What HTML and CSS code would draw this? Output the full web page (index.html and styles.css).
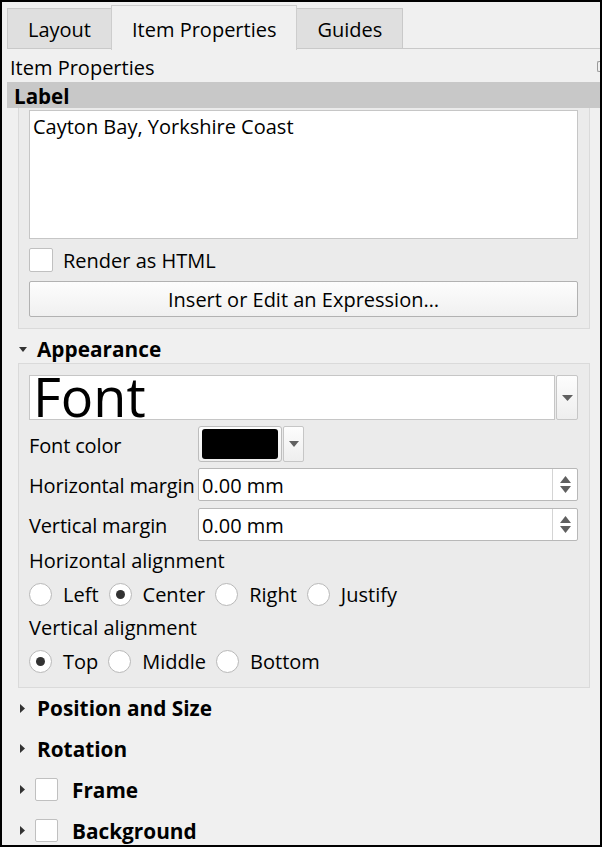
FILE: index.html
```html
<!DOCTYPE html>
<html>
<head>
<meta charset="utf-8">
<link rel="stylesheet" href="styles.css">
</head>
<body>
<div class="window">
  <div class="tabbar">
    <div class="tab">Layout</div>
    <div class="tab selected">Item Properties</div>
    <div class="tab">Guides</div>
    <div class="tab-fill"></div>
  </div>
  <div class="caption">
    <span>Item Properties</span>
    <span class="handle"></span>
  </div>
  <div class="scroll">
    <div class="section-bar">Label</div>
    <div class="group label-group">
      <div class="textarea">Cayton Bay, Yorkshire Coast</div>
      <div class="check-row">
        <span class="checkbox"></span>
        <span class="check-text">Render as HTML</span>
      </div>
      <div class="button">Insert or Edit an Expression…</div>
    </div>

    <div class="coll-header open">
      <svg class="arrow-down" width="8" height="5" viewBox="0 0 8 5"><polygon points="0,0 8,0 4,5" fill="#333"/></svg>
      <span>Appearance</span>
    </div>
    <div class="group appearance-group">
      <div class="font-combo">
        <div class="font-main"><span class="font-sample">Font</span></div>
        <div class="drop-btn big">
          <svg width="11" height="6" viewBox="0 0 11 6"><polygon points="0,0 11,0 5.5,6" fill="#606060"/></svg>
        </div>
      </div>
      <div class="form-row color-row">
        <span class="form-label">Font color</span>
        <div class="color-btn"><span class="swatch"></span></div>
        <div class="drop-btn small">
          <svg width="10" height="6" viewBox="0 0 10 6"><polygon points="0,0 10,0 5,6" fill="#606060"/></svg>
        </div>
      </div>
      <div class="form-row spin-row">
        <span class="form-label">Horizontal margin</span>
        <div class="spinbox">
          <span class="spin-text">0.00 mm</span>
          <span class="spin-btns">
            <svg width="11" height="7" viewBox="0 0 11 7"><polygon points="0,7 11,7 5.5,0" fill="#606060"/></svg>
            <svg width="11" height="7" viewBox="0 0 11 7"><polygon points="0,0 11,0 5.5,7" fill="#606060"/></svg>
          </span>
        </div>
      </div>
      <div class="form-row spin-row second">
        <span class="form-label">Vertical margin</span>
        <div class="spinbox">
          <span class="spin-text">0.00 mm</span>
          <span class="spin-btns">
            <svg width="11" height="7" viewBox="0 0 11 7"><polygon points="0,7 11,7 5.5,0" fill="#606060"/></svg>
            <svg width="11" height="7" viewBox="0 0 11 7"><polygon points="0,0 11,0 5.5,7" fill="#606060"/></svg>
          </span>
        </div>
      </div>
      <div class="sub-label">Horizontal alignment</div>
      <div class="radio-row">
        <span class="radio"></span><span class="radio-text">Left</span>
        <span class="radio on"></span><span class="radio-text">Center</span>
        <span class="radio"></span><span class="radio-text">Right</span>
        <span class="radio"></span><span class="radio-text">Justify</span>
      </div>
      <div class="sub-label">Vertical alignment</div>
      <div class="radio-row">
        <span class="radio on"></span><span class="radio-text">Top</span>
        <span class="radio"></span><span class="radio-text">Middle</span>
        <span class="radio"></span><span class="radio-text">Bottom</span>
      </div>
    </div>

    <div class="coll-row first">
      <svg class="arrow-right" width="5" height="9" viewBox="0 0 5 9"><polygon points="0,0 5,4.5 0,9" fill="#333"/></svg>
      <span class="coll-text">Position and Size</span>
    </div>
    <div class="coll-row">
      <svg class="arrow-right" width="5" height="9" viewBox="0 0 5 9"><polygon points="0,0 5,4.5 0,9" fill="#333"/></svg>
      <span class="coll-text">Rotation</span>
    </div>
    <div class="coll-row">
      <svg class="arrow-right" width="5" height="9" viewBox="0 0 5 9"><polygon points="0,0 5,4.5 0,9" fill="#333"/></svg>
      <span class="checkbox coll-check"></span>
      <span class="coll-text checked-text">Frame</span>
    </div>
    <div class="coll-row">
      <svg class="arrow-right" width="5" height="9" viewBox="0 0 5 9"><polygon points="0,0 5,4.5 0,9" fill="#333"/></svg>
      <span class="checkbox coll-check"></span>
      <span class="coll-text checked-text">Background</span>
    </div>
  </div>
</div>
</body>
</html>
```

FILE: styles.css
```css
* { box-sizing: border-box; }
html, body { margin: 0; padding: 0; }
body {
  font-family: "Open Sans", "Noto Sans", sans-serif;
  font-size: 20px;
  color: #000;
  background: #f0f0f0;
}
.window {
  width: 602px;
  height: 847px;
  border: 2px solid #000;
  background: #f0f0f0;
  overflow: hidden;
  display: flex;
  flex-direction: column;
}

/* tabs */
.tabbar {
  display: flex;
  align-items: flex-end;
  height: 48px;
  padding-left: 5px;
  flex: none;
}
.tab {
  height: 41px;
  margin-bottom: 1px;
  padding: 2px 20px 0 20px;
  line-height: 37px;
  border: 1px solid #c9c9c9;
  background: #dfdfdf;
  white-space: nowrap;
}
.tab.selected {
  height: 45px;
  margin-bottom: 0;
  margin-left: -1px;
  margin-right: -1px;
  padding-top: 6px;
  line-height: 36px;
  background: #f0f0f0;
  border-bottom: none;
  border-color: #cdcdcd;
  position: relative;
  z-index: 1;
}
.tab-fill {
  flex: 1;
  height: 1px;
  margin-bottom: 1px;
  background: #c9c9c9;
}

/* caption */
.caption {
  height: 32px;
  padding: 3px 0 0 8px;
  line-height: 30px;
  display: flex;
  justify-content: space-between;
  align-items: center;
  flex: none;
}
.handle {
  width: 3px;
  height: 11px;
  border: 1px solid #9a9a9a;
  border-right: none;
  border-radius: 2px 0 0 2px;
  margin-top: -2px;
}

/* scroll area */
.scroll {
  margin-left: 5px;
  display: flex;
  flex-direction: column;
  flex: 1;
}
.section-bar {
  height: 26px;
  background: #c8c8c8;
  font-weight: 700;
  font-size: 20.6px;
  line-height: 24px;
  padding: 2px 0 0 7px;
}
.group {
  margin: 0 10px 0 11px;
  border: 1px solid #dadada;
  background: #ebebeb;
  padding: 0 11px 0 10px;
}
.label-group {
  border-top: none;
  padding-top: 2px;
  padding-bottom: 11px;
}
.textarea {
  height: 129px;
  background: #fff;
  border: 1px solid #c6c6c6;
  padding: 2px 3px;
  line-height: 27px;
}
.check-row {
  display: flex;
  align-items: center;
  height: 24px;
  margin-top: 9px;
}
.checkbox {
  display: inline-block;
  width: 24px;
  height: 24px;
  background: #fff;
  border: 1px solid #c0c0c0;
  border-radius: 2px;
  flex: none;
}
.check-text { margin-left: 10px; }
.button {
  height: 36px;
  margin-top: 9px;
  border: 1px solid #b2b2b2;
  border-radius: 2px;
  background: linear-gradient(#fdfdfd, #f0f0f0);
  text-align: center;
  line-height: 34px;
  padding-top: 1px;
}

/* collapsible headers */
.coll-header {
  height: 34px;
  padding: 6px 0 0 12px;
  line-height: 28px;
  display: flex;
  align-items: center;
  font-weight: 700;
  font-size: 20.8px;
}
.arrow-down { margin-right: 10px; flex: none; }

.appearance-group {
  padding-top: 11px;
  padding-bottom: 12px;
}
.font-combo {
  display: flex;
  height: 45px;
}
.font-main {
  flex: 1;
  height: 45px;
  background: #fff;
  border: 1px solid #c6c6c6;
  padding-left: 3px;
  display: flex;
  align-items: flex-start;
}
.font-sample {
  font-size: 54px;
  line-height: 40px;
  height: 43px;
  display: block;
}
.drop-btn {
  display: flex;
  align-items: center;
  justify-content: center;
  border: 1px solid #c6c6c6;
  border-radius: 2px;
  background: linear-gradient(#fdfdfd, #eeeeee);
  flex: none;
}
.drop-btn.big {
  width: 22px;
  margin-left: 1px;
}
.drop-btn.small {
  width: 21px;
  height: 36px;
  margin-left: 1px;
}
.form-row {
  display: flex;
  align-items: center;
}
.form-label {
  width: 169px;
  flex: none;
  white-space: nowrap;
  letter-spacing: -0.15px;
  padding-top: 2px;
}
.color-row {
  height: 36px;
  margin-top: 6px;
}
.color-btn {
  width: 84px;
  height: 36px;
  border: 1px solid #bdbdbd;
  border-radius: 3px;
  background: linear-gradient(#fdfdfd, #eeeeee);
  padding: 2px 3px;
  display: flex;
}
.swatch {
  flex: 1;
  background: #000;
  border-radius: 3px;
}
.spin-row {
  height: 33px;
  margin-top: 6px;
}
.spin-row.second { margin-top: 7px; }
.spinbox {
  flex: 1;
  height: 33px;
  background: #fff;
  border: 1px solid #b8b8b8;
  border-radius: 2px;
  display: flex;
}
.spin-text {
  flex: 1;
  padding: 2px 0 0 3px;
  line-height: 29px;
}
.spin-btns {
  width: 25px;
  border-left: 1px solid #d4d4d4;
  display: flex;
  flex-direction: column;
  align-items: center;
  justify-content: center;
  gap: 3px;
}
.sub-label {
  height: 28px;
  line-height: 28px;
  margin-top: 6px;
}
.radio-row {
  display: flex;
  align-items: center;
  height: 28px;
  margin-top: 5px;
}
.radio {
  width: 23px;
  height: 23px;
  border-radius: 50%;
  background: #fff;
  border: 1px solid #b8b8b8;
  flex: none;
  display: flex;
  align-items: center;
  justify-content: center;
}
.radio.on::after {
  content: "";
  width: 9px;
  height: 9px;
  border-radius: 50%;
  background: #333;
}
.radio-text {
  margin-left: 11px;
  margin-right: 10px;
}

.coll-row {
  height: 41px;
  display: flex;
  align-items: center;
  padding-left: 13px;
  font-weight: 700;
  font-size: 20.8px;
  flex: none;
}
.coll-row.first { height: 40px; }
.arrow-right { flex: none; margin-right: 12px; }
.coll-check {
  width: 23px;
  height: 23px;
  margin-left: -2px;
}
.checked-text { margin-left: 14px; }
```
